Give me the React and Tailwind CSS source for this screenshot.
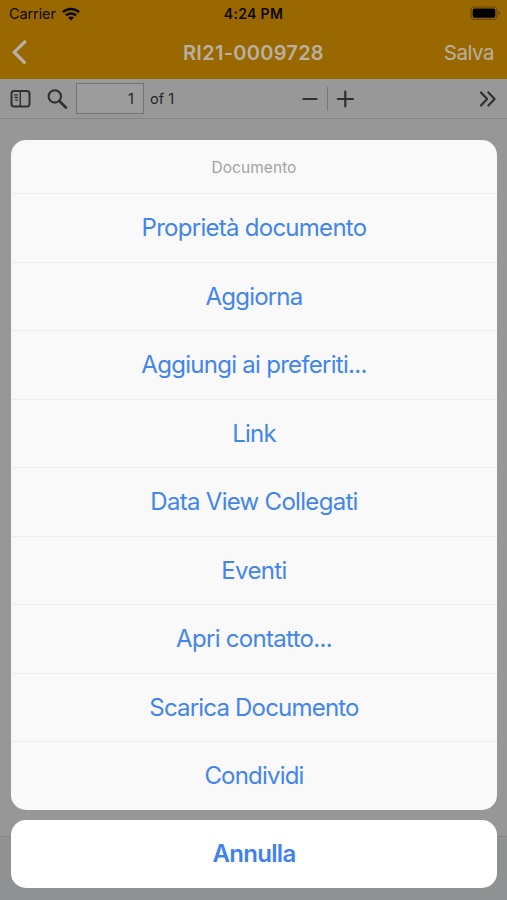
const actions = [
  { label: "Proprietà documento", tracking: "tracking-[-0.73px]" },
  { label: "Aggiorna", tracking: "tracking-[-0.8px]" },
  { label: "Aggiungi ai preferiti...", tracking: "tracking-[-0.72px]" },
  { label: "Link", tracking: "tracking-[-0.8px]" },
  { label: "Data View Collegati", tracking: "tracking-[-0.7px]" },
  { label: "Eventi", tracking: "tracking-[-0.65px]" },
  { label: "Apri contatto...", tracking: "tracking-[-0.7px]" },
  { label: "Scarica Documento", tracking: "tracking-[-0.8px]" },
  { label: "Condividi", tracking: "tracking-[-0.8px]" },
];

function WifiIcon() {
  return (
    <svg width="18" height="14" viewBox="0 0 18 14" fill="none" stroke="#0d0900" strokeWidth="2.5">
      <path d="M0.9 5.2C5.4 0.8 12.6 0.8 17.1 5.2" />
      <path d="M3.9 8.4C6.8 5.7 11.2 5.7 14.1 8.4" />
      <path d="M9 13.4L6 10.5C7.8 9 10.2 9 12 10.5Z" fill="#0d0900" stroke="none" />
    </svg>
  );
}

function BatteryIcon() {
  return (
    <svg width="32" height="15" viewBox="0 0 32 15" fill="none">
      <rect x="1" y="1" width="26" height="12.4" rx="3.6" stroke="#674500" strokeWidth="1.2" />
      <rect x="2.7" y="2.6" width="22.6" height="9.2" rx="2.1" fill="#000" />
      <path d="M28.7 5.2C30.8 6 30.8 8.5 28.7 9.3Z" fill="#674500" />
    </svg>
  );
}

function StatusBar() {
  return (
    <div className="grid h-[27px] grid-cols-3 items-center text-[#0d0900]">
      <div className="flex items-center gap-[6px] pl-[9px]">
        <span className="pt-[1px] text-[14.5px] leading-none tracking-[-0.1px]">Carrier</span>
        <WifiIcon />
      </div>
      <span className="text-center text-[14px] font-semibold leading-none tracking-[0.35px]">4:24 PM</span>
      <div className="flex justify-end pr-[5px]">
        <BatteryIcon />
      </div>
    </div>
  );
}

function NavBar() {
  return (
    <div className="grid h-[52px] grid-cols-[100px_1fr_100px] items-center text-[#b9b0a3]">
      <svg className="mb-[3px] ml-[11px]" width="18" height="28" viewBox="0 0 18 28" fill="none" stroke="#b5b0a8" strokeWidth="3.2" strokeLinecap="square">
        <path d="M13.6 4L3.2 14.2L13.2 24.2" />
      </svg>
      <span className="text-center text-[20px] font-semibold leading-none tracking-[0.28px]">RI21-0009728</span>
      <span className="pr-[13px] text-right text-[20.5px] leading-none tracking-[-0.5px]">Salva</span>
    </div>
  );
}

function Toolbar() {
  return (
    <div className="flex h-[40px] items-center border-b border-[#868686] bg-[#989898] text-[#242424]">
      <svg className="ml-[10px]" width="21" height="18" viewBox="0 0 21 18" fill="none" stroke="#303030">
        <rect x="1.5" y="1" width="18" height="15.6" rx="2.6" strokeWidth="2" />
        <path d="M10.3 1V17" strokeWidth="1.4" />
        <path d="M4 4.9H8M4.6 7.5H8M5.2 10.1H8" strokeWidth="1.3" />
      </svg>
      <svg className="ml-[15px]" width="22" height="22" viewBox="0 0 22 22" fill="none" stroke="#303030">
        <circle cx="8.8" cy="8.4" r="6.2" strokeWidth="2.1" />
        <path d="M13.3 13L20 19.6" strokeWidth="2.7" strokeLinecap="round" />
      </svg>
      <div className="ml-[8px] flex h-[31px] w-[68px] items-center justify-end border border-[#747474] bg-[#9c9c9c] pr-[9px] pt-[1px] text-[14.5px] leading-none">1</div>
      <span className="ml-[6px] w-[40px] pt-[1px] text-[14.5px] leading-none">of 1</span>
      <svg className="ml-[111px]" width="54" height="26" viewBox="0 0 54 26" fill="none" stroke="#303030" strokeWidth="2.2" strokeLinecap="round">
        <path d="M2.5 13H15.5M36.8 13H52M44.3 5.5V20.5" />
        <path d="M26.5 1V25" stroke="#777" strokeWidth="1" strokeLinecap="butt" />
      </svg>
      <svg className="ml-auto mr-[10px]" width="20" height="18" viewBox="0 0 20 18" fill="none" stroke="#303030" strokeWidth="2.2" strokeLinecap="round" strokeLinejoin="round">
        <path d="M4 2.5L10.2 9L4 15.5M11.4 2.5L17.6 9L11.4 15.5" />
      </svg>
    </div>
  );
}

function ActionSheet() {
  return (
    <div className="absolute inset-x-0 bottom-0 flex flex-col gap-[10px] pb-[12.5px] pl-[11px] pr-[10px]">
      <div className="flex h-[669.5px] flex-col overflow-hidden rounded-[15px] bg-[#f9f9f9]">
        <div className="flex h-[53px] shrink-0 items-center justify-center pt-[3px] text-[15.5px] tracking-[0.05px] text-[#a3a3a3]">Documento</div>
        {actions.map(({ label, tracking }) => (
          <button key={label} className={`flex-1 border-t border-[#ededee] pt-[1px] text-[24px] leading-none text-[#4285eb] ${tracking}`}>
            {label}
          </button>
        ))}
      </div>
      <button className="h-[68px] rounded-[15px] bg-white text-[24px] font-semibold leading-none tracking-[-0.7px] text-[#3f82ec]">Annulla</button>
    </div>
  );
}

export default function App() {
  return (
    <main className="relative flex h-[900px] w-[507px] flex-col overflow-hidden bg-[#979797] font-['Inter','Liberation_Sans',sans-serif]">
      <header className="bg-[#9a6800]">
        <StatusBar />
        <NavBar />
      </header>
      <Toolbar />
      <footer className="mt-auto h-[64px] border-t border-[#868686] bg-[#8f9192]" />
      <ActionSheet />
    </main>
  );
}
